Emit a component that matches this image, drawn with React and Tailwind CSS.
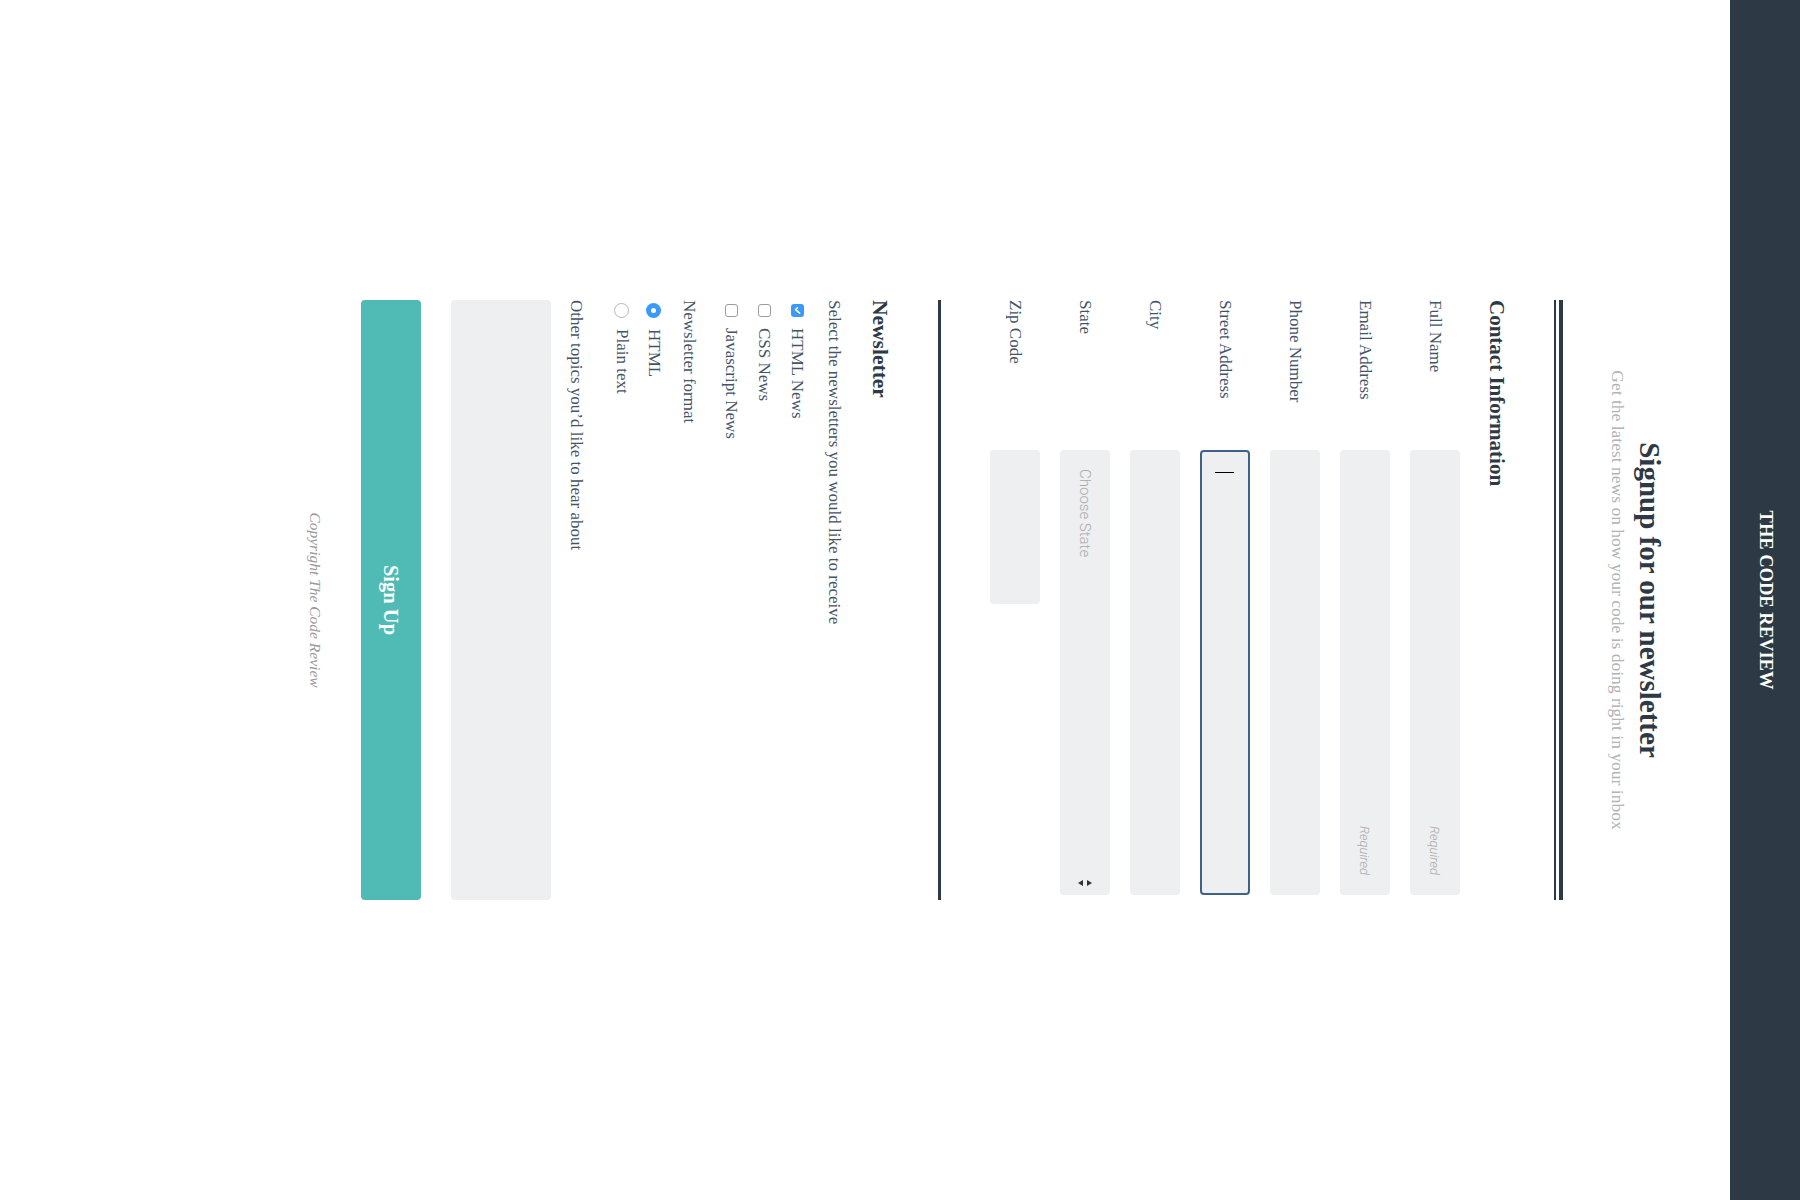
import { useState } from 'react';

const serif = "font-['Liberation_Serif','Times_New_Roman',serif]";

function Field({ label, children }) {
  return (
    <div className="flex items-center h-[50px]">
      <label className="w-[150px] shrink-0 text-[17px] text-[#435466]">{label}</label>
      {children}
    </div>
  );
}

function TextInput({ placeholder = '', width = 'w-[445px]' }) {
  return (
    <input
      type="text"
      placeholder={placeholder}
      className={`${width} h-[50px] rounded-[4px] bg-[#eeeff1] px-5 text-right font-['Roboto',sans-serif] text-[13px] outline-none placeholder:italic placeholder:font-light placeholder:text-[#a9a9a9]`}
    />
  );
}

function CheckBox({ checked, label }) {
  return (
    <div className="flex items-center h-[33px]">
      {checked ? (
        <span className="ml-[4px] mr-[3px] flex h-[13px] w-[13px] items-center justify-center rounded-[3px] bg-[#3b99fc]">
          <svg width="9" height="9" viewBox="0 0 9 9" fill="none">
            <path d="M1.8 4.6 L3.7 6.5 L7.2 2.4" stroke="white" strokeWidth="1.6" strokeLinecap="round" strokeLinejoin="round" />
          </svg>
        </span>
      ) : (
        <span className="ml-[4px] mr-[3px] h-[13px] w-[13px] rounded-[3px] border border-[#9c9c9c] bg-white" />
      )}
      <span className="ml-2 text-[17px] text-[#435466]">{label}</span>
    </div>
  );
}

function Radio({ checked, label }) {
  return (
    <div className="flex items-center h-[32px]">
      {checked ? (
        <span className="ml-[3px] mr-[3px] flex h-[15px] w-[15px] items-center justify-center rounded-full bg-[#3b99fc]">
          <span className="h-[5px] w-[5px] rounded-full bg-white" />
        </span>
      ) : (
        <span className="ml-[3px] mr-[3px] h-[15px] w-[15px] rounded-full border border-[#b5b5b5] bg-white" />
      )}
      <span className="ml-2 text-[17px] text-[#435466]">{label}</span>
    </div>
  );
}

export default function App() {
  const [topics, setTopics] = useState('');

  return (
    <div className="w-[1800px] h-[1200px] overflow-hidden bg-white">
      <div className={`w-[1200px] h-[1800px] origin-top-left translate-x-[1800px] rotate-90 bg-white ${serif}`}>
        <header className="flex h-[70px] items-center justify-center bg-[#2d3a45] text-[18.5px] font-bold text-white">
          THE CODE REVIEW
        </header>

        <main className="mx-auto w-[600px]">
          <div className="mt-[62px] text-center">
            <h1 className="text-[29px] leading-[36px] font-bold text-[#2d3a45]">Signup for our newsletter</h1>
            <p className="mt-[2px] text-[17.5px] leading-[24px] text-[#b3b3b3]">
              Get the latest news on how your code is doing right in your inbox
            </p>
          </div>

          <div className="mt-[43px] h-[4px] bg-[#2d3a45]" />
          <div className="mt-[3px] h-[2px] bg-[#2d3a45]" />

          <h2 className="mt-[43px] text-[21px] leading-[28px] font-bold text-[#2d3a45]">Contact Information</h2>

          <div className="mt-[23px] flex flex-col gap-[20px]">
            <Field label="Full Name">
              <TextInput placeholder="Required" />
            </Field>
            <Field label="Email Address">
              <TextInput placeholder="Required" />
            </Field>
            <Field label="Phone Number">
              <TextInput />
            </Field>
            <Field label="Street Address">
              <div className="flex h-[50px] w-[445px] items-center rounded-[4px] border-2 border-[#3f6187] bg-[#eeeff1] pl-[20px]">
                <span className="h-[19px] w-px bg-black" />
              </div>
            </Field>
            <Field label="City">
              <TextInput />
            </Field>
            <Field label="State">
              <div className="flex h-[50px] w-[445px] items-center justify-between rounded-[4px] bg-[#eeeff1] pl-[19px] pr-[9px]">
                <span className="font-['Roboto',sans-serif] text-[15px] font-light text-[#a9a9a9]">Choose State</span>
                <svg width="6" height="15" viewBox="0 0 6 15" className="text-[#333]">
                  <path d="M3 0 L6 5 L0 5 Z" fill="currentColor" />
                  <path d="M0 9 L6 9 L3 14 Z" fill="currentColor" />
                </svg>
              </div>
            </Field>
            <Field label="Zip Code">
              <TextInput width="w-[154px]" />
            </Field>
          </div>

          <div className="mt-[49px] h-[3px] bg-[#2d3a45]" />

          <h2 className="mt-[44px] text-[21.5px] leading-[28px] font-bold text-[#2d3a45]">Newsletter</h2>
          <p className="mt-[21px] text-[17px] leading-[22px] text-[#435466]">
            Select the newsletters you would like to receive
          </p>

          <div className="mt-[9px]">
            <CheckBox checked label="HTML News" />
            <CheckBox label="CSS News" />
            <CheckBox label="Javascript News" />
          </div>

          <p className="mt-[15px] text-[17px] leading-[22px] text-[#435466]">Newsletter format</p>
          <div className="mt-[8px]">
            <Radio checked label="HTML" />
            <Radio label="Plain text" />
          </div>

          <p className="mt-[19px] text-[17px] leading-[22px] text-[#435466]">Other topics you&rsquo;d like to hear about</p>
          <textarea
            value={topics}
            onChange={(e) => setTopics(e.target.value)}
            className="mt-[14px] block h-[100px] w-full resize-none rounded-[4px] bg-[#eeeff1] outline-none"
          />

          <button className="mt-[30px] flex h-[60px] w-full items-center justify-center rounded-[4px] bg-[#4fbbb4] text-[20.5px] font-bold text-white">
            Sign Up
          </button>

          <p className="mt-[35px] text-center text-[15.5px] leading-[22px] italic text-[#9a9a9a]">Copyright The Code Review</p>
        </main>
      </div>
    </div>
  );
}
